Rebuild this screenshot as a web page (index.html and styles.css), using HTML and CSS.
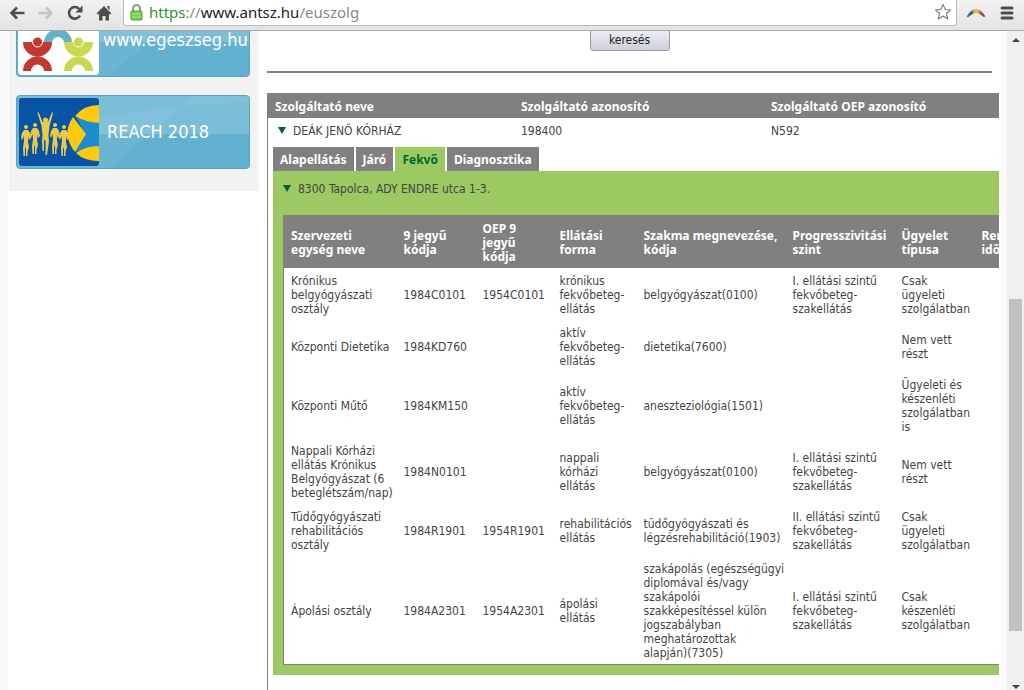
FILE: index.html
```html
<!DOCTYPE html>
<html lang="hu">
<head>
<meta charset="utf-8">
<title>ANTSZ</title>
<link rel="stylesheet" href="styles.css">
</head>
<body>
<header class="toolbar">
  <nav class="nav">
    <button class="tool" aria-label="Vissza"><svg width="16" height="16" viewBox="0 0 16 16"><path d="M15.500 8H3M8 2.500 2.500 8 8 13.500" fill="none" stroke="#4d4d4d" stroke-width="2.600"/></svg></button>
    <button class="tool" aria-label="Előre"><svg width="16" height="16" viewBox="0 0 16 16"><path d="M0.500 8H13M8 2.500 13.500 8 8 13.500" fill="none" stroke="#c4c4c4" stroke-width="2.600"/></svg></button>
    <button class="tool" aria-label="Frissítés"><svg width="16" height="16" viewBox="0 0 16 16"><path d="M13 10.500A5.800 5.800 0 1 1 12.200 4" fill="none" stroke="#4d4d4d" stroke-width="2.600"/><path d="M15.500 0.500V7.500H8.500z" fill="#4d4d4d"/></svg></button>
    <button class="tool" aria-label="Kezdőlap"><svg width="16" height="16" viewBox="0 0 16 16"><path d="M8 1 15.500 8.500 14 9.500 13 8.800V15.500H9.500V11H6.500V15.500H3V8.800L2 9.500 0.500 8.500zM11.500 1H13.500V5L11.500 3z" fill="#4d4d4d"/></svg></button>
  </nav>
  <div class="address">
    <svg width="13" height="17" viewBox="0 0 13 17"><path d="M3 8V4.500a3.500 3.500 0 0 1 7 0V8" fill="none" stroke="#8b9a8b" stroke-width="2"/><rect x="1" y="7" width="11" height="9" rx="1" fill="#78cf50" stroke="#4ba32c"/><path d="M2 10H11M2 13H11" stroke="#a5e388"/></svg>
    <span class="url"><span class="secure">https</span>://<span class="host">www.antsz.hu</span>/euszolg</span>
    <button class="tool star" aria-label="Könyvjelző"><svg width="18" height="20" viewBox="0 0 20 20"><path d="M10 1.500 12.400 7.200 18.500 7.700 13.800 11.700 15.300 17.800 10 14.500 4.700 17.800 6.200 11.700 1.500 7.700 7.600 7.200z" fill="#fff" stroke="#777" stroke-width="1.200" stroke-linejoin="round"/></svg></button>
  </div>
  <svg class="ext" width="20" height="12" viewBox="0 0 20 12"><defs><linearGradient id="arc"><stop offset="0" stop-color="#2fae5e"/><stop offset=".25" stop-color="#2b5597"/><stop offset=".42" stop-color="#f0b040"/><stop offset=".6" stop-color="#eeb573"/><stop offset=".75" stop-color="#b0553b"/><stop offset="1" stop-color="#2b5ba8"/></linearGradient></defs><path d="M0.500 9.500Q5 2 10 2T19.500 9.500L17.500 10Q13 6 10 6T2 10.500z" fill="url(#arc)"/></svg>
  <button class="tool" aria-label="Menü"><svg width="14" height="14" viewBox="0 0 14 14"><path d="M2 2H12M2 7H12M2 12H12" stroke="#4d4d4d" stroke-width="3" stroke-linecap="round"/></svg></button>
</header>
<div class="viewport">
  <div class="page">
    <aside class="sidebar">
      <a class="banner" href="#">
        <svg class="sheen" viewBox="0 0 232 72" preserveAspectRatio="none"><path d="M0 0H232V38H68Z" fill="#fff" opacity=".16"/><path d="M176 0 92 72H0V40Q110 10 232 6V0z" fill="#fff" opacity=".06"/></svg>
        <svg class="logo" width="81" height="70" viewBox="0 0 81 70"><rect width="81" height="70" rx="4" fill="#fff"/><path d="M26 38a14 14 0 0 1 28 0H46a6 6 0 0 0-12 0z" fill="#64b2c8"/><g fill="#c03a32"><path d="M5 37a14.500 14.500 0 0 0 29 0zM5 66a14.500 14.500 0 0 1 29 0H26a6 6 0 0 0-13 0z"/><circle cx="19.500" cy="37" r="5" stroke="#fff"/></g><g fill="#c9d84f"><path d="M46 37a14.500 14.500 0 0 0 29 0zM46 66a14.500 14.500 0 0 1 29 0H67a6 6 0 0 0-13 0z"/><circle cx="60.500" cy="37" r="5" stroke="#fff"/></g></svg>
        <span class="label">www.egeszseg.hu</span>
      </a>
      <a class="banner" href="#">
        <svg class="sheen" viewBox="0 0 232 72" preserveAspectRatio="none"><path d="M0 0H232V38H68Z" fill="#fff" opacity=".16"/><path d="M176 0 92 72H0V40Q110 10 232 6V0z" fill="#fff" opacity=".06"/></svg>
        <svg class="logo" width="81" height="70" viewBox="0 0 81 70"><rect x="1" y="1" width="80" height="68" rx="3" fill="#0753a6"/><path d="M81 23 57 18 67 37 57 55 81 50z" fill="#1b8ccd"/><path d="M81 8V26Q67 25 57 19 66 8 81 8zM55 20 68 37 57 55Q43 37 55 20zM58 56Q68 49 81 49V64Q66 64 58 56z" fill="#ffc90c"/><defs><path id="runner" d="M0 0a2 2 0 1 1 .1 0M-2 1H2L4 4 5 9 3 11 2.500 7 2 13 3 18 1.500 23 1.500 27H0L0 20-1 18-1 27H-2.500L-3 19-2 12-2.500 7-4 11-5 9-4 4z"/></defs><g fill="#ecc94b"><use href="#runner" x="8" y="32"/><use href="#runner" x="17" y="30"/><use href="#runner" x="37" y="30"/><use href="#runner" x="46" y="32"/><circle cx="27.500" cy="23" r="2.500"/><path d="M20.500 15 24.500 25H30L34 15 35 16 31.500 29 30.500 38 31 45 29 58H27.500L27.500 44 26 42 26 54H24.500L24 44 24.500 38 23.500 29 19.500 16z"/></g></svg>
        <span class="label wide">REACH 2018</span>
      </a>
    </aside>
    <main class="main">
      <form class="search"><button class="submit" type="button">keresés</button></form>
      <section class="results">
        <table class="providers">
          <colgroup><col class="p1"><col class="p2"><col></colgroup>
          <thead><tr><th>Szolgáltató neve</th><th>Szolgáltató azonosító</th><th>Szolgáltató OEP azonosító</th></tr></thead>
          <tbody><tr><td><span class="arrow"></span>DEÁK JENŐ KÓRHÁZ</td><td>198400</td><td>N592</td></tr></tbody>
        </table>
        <div class="tabs">
          <button class="tab">Alapellátás</button><button class="tab">Járó</button><button class="tab active">Fekvő</button><button class="tab">Diagnosztika</button>
        </div>
        <div class="panel">
          <div class="site"><span class="arrow"></span>8300 Tapolca, ADY ENDRE utca 1-3.</div>
          <table class="units">
            <colgroup><col class="u1"><col class="u2"><col class="u3"><col class="u4"><col class="u5"><col class="u6"><col class="u7"><col class="u8"></colgroup>
            <thead><tr><th>Szervezeti egység neve</th><th>9 jegyű kódja</th><th>OEP 9 jegyű kódja</th><th>Ellátási forma</th><th>Szakma megnevezése, kódja</th><th>Progresszivitási szint</th><th>Ügyelet típusa</th><th>Rendelési<br>idő</th></tr></thead>
            <tbody>
              <tr><td>Krónikus<br>belgyógyászati<br>osztály</td><td>1984C0101</td><td>1954C0101</td><td>krónikus<br>fekvőbeteg-<br>ellátás</td><td>belgyógyászat(0100)</td><td>I. ellátási szintű<br>fekvőbeteg-<br>szakellátás</td><td>Csak<br>ügyeleti<br>szolgálatban</td><td></td></tr>
              <tr><td>Központi Dietetika</td><td>1984KD760</td><td></td><td>aktív<br>fekvőbeteg-<br>ellátás</td><td>dietetika(7600)</td><td></td><td>Nem vett<br>részt</td><td></td></tr>
              <tr><td>Központi Műtő</td><td>1984KM150</td><td></td><td>aktív<br>fekvőbeteg-<br>ellátás</td><td>aneszteziológia(1501)</td><td></td><td>Ügyeleti és<br>készenléti<br>szolgálatban<br>is</td><td></td></tr>
              <tr><td>Nappali Kórházi<br>ellátás Krónikus<br>Belgyógyászat (6<br>beteglétszám/nap)</td><td>1984N0101</td><td></td><td>nappali<br>kórházi<br>ellátás</td><td>belgyógyászat(0100)</td><td>I. ellátási szintű<br>fekvőbeteg-<br>szakellátás</td><td>Nem vett<br>részt</td><td></td></tr>
              <tr><td>Tüdőgyógyászati<br>rehabilitációs<br>osztály</td><td>1984R1901</td><td>1954R1901</td><td>rehabilitációs<br>ellátás</td><td>tüdőgyógyászati és<br>légzésrehabilitáció(1903)</td><td>II. ellátási szintű<br>fekvőbeteg-<br>szakellátás</td><td>Csak<br>ügyeleti<br>szolgálatban</td><td></td></tr>
              <tr><td>Ápolási osztály</td><td>1984A2301</td><td>1954A2301</td><td>ápolási<br>ellátás</td><td>szakápolás (egészségügyi<br>diplomával és/vagy<br>szakápolói<br>szakképesítéssel külön<br>jogszabályban<br>meghatározottak<br>alapján)(7305)</td><td>I. ellátási szintű<br>fekvőbeteg-<br>szakellátás</td><td>Csak<br>készenléti<br>szolgálatban</td><td></td></tr>
            </tbody>
          </table>
        </div>
      </section>
    </main>
  </div>
  <div class="scrollbar"><span class="up"></span><span class="thumb"></span><span class="down"></span></div>
</div>
</body>
</html>
```
FILE: styles.css
```css
* { box-sizing: border-box; }
body {
  margin: 0;
  height: 100vh;
  display: flex;
  flex-direction: column;
  overflow: hidden;
  background: #fff;
  color: #444;
  font: 12px/14px "DejaVu Sans Condensed", "DejaVu Sans", sans-serif;
}
button { font: inherit; border: 0; padding: 0; background: none; }
svg { display: block; flex: none; }

.toolbar {
  flex: none;
  display: flex;
  align-items: center;
  height: 31px;
  padding: 0 10px 5px 9px;
  background: linear-gradient(#f2f2f2, #e3e3e3);
  border-bottom: 1px solid #a8a8a8;
}
.nav { display: flex; gap: 13px; margin-right: 11px; }
.address {
  flex: 1;
  display: flex;
  align-items: center;
  gap: 6px;
  height: 26px;
  padding: 0 4px 0 6px;
  background: #fff;
  border: 1px solid #bbb;
  border-top: 0;
  border-radius: 0 0 3px 3px;
}
.url { flex: 1; font: 15px/20px "Noto Sans", sans-serif; color: #888; }
.secure { color: #2e962e; }
.host { color: #222; }
.ext { margin: 0 14px 0 9px; }

.viewport { flex: 1; min-height: 0; display: flex; overflow: hidden; }
.page {
  flex: 1;
  min-width: 0;
  display: flex;
  align-items: flex-start;
  gap: 8px;
  padding: 0 8px 0 9px;
  background: linear-gradient(90deg, #fafafa 8px, #fff 8px calc(100% - 6px), #fafafa calc(100% - 6px));
}
.sidebar {
  flex: none;
  width: 250px;
  margin-top: -28px;
  padding: 0 9px 22px 7px;
  display: flex;
  flex-direction: column;
  gap: 18px;
  background: #f2f2f2;
}
.banner {
  position: relative;
  display: flex;
  align-items: center;
  height: 74px;
  padding-left: 1px;
  overflow: hidden;
  background: #63b1d0;
  border: 1px solid #57a6bd;
  border-radius: 4px;
  color: #fff;
  text-decoration: none;
}
.sheen { position: absolute; inset: 0; width: 100%; height: 100%; }
.logo { position: relative; }
.label { position: relative; padding-left: 4px; font: 18px/22px "DejaVu Sans Condensed", sans-serif; white-space: nowrap; }
.wide { padding-left: 8px; }

.main { flex: 1; min-width: 0; }
.search {
  display: flex;
  justify-content: center;
  margin: -6px 7px 20px 0;
  padding-bottom: 20px;
  border-bottom: 2px solid #808080;
}
.submit {
  width: 80px;
  height: 26px;
  padding-top: 3px;
  color: #222;
  background: linear-gradient(#f4f4f8, #cfcfdd);
  border: 1px solid #9a9aa8;
  border-radius: 3px;
}
.results { border-left: 1px solid #808080; height: 100vh; overflow: hidden; }
table { border-collapse: collapse; table-layout: fixed; }
th, td { text-align: left; padding: 6px 7px 4px; }
th { color: #fff; background: #808080; font-family: "Noto Sans", sans-serif; font-weight: 700; }
.providers { width: 100%; }
.providers th { padding: 7px 7px 4px; }
.p1 { width: 246px; }
.p2 { width: 250px; }
.arrow {
  display: inline-block;
  margin: 0 7px 1px 3px;
  border: 4px solid transparent;
  border-top: 7px solid #006432;
  border-bottom: 0;
}
.tabs { display: flex; gap: 2px; padding: 5px 0 0 5px; }
.tab {
  padding: 6px 7px 4px;
  color: #fff;
  background: #808080;
  font-family: "Noto Sans", sans-serif;
  font-weight: 700;
}
.active { color: #006432; background: #9dc963; }
.panel { margin-left: 5px; padding: 11px 0 10px 10px; background: #9dc963; }
.site { padding-bottom: 19px; }
.site .arrow { margin-left: 0; }
.units { width: 800px; background: #fff; border: 1px solid #808080; }
.u1 { width: 113px; }
.u2 { width: 79px; }
.u3 { width: 77px; }
.u4 { width: 84px; }
.u5 { width: 149px; }
.u6 { width: 109px; }
.u7 { width: 80px; }
.units td { white-space: nowrap; }

.scrollbar {
  flex: none;
  width: 17px;
  display: flex;
  flex-direction: column;
  align-items: center;
  justify-content: space-between;
  padding: 7px 0 1px;
  background: #f0f0f0;
}
.up, .down { border: 4px solid transparent; }
.up { border-top: 0; border-bottom: 4px solid #444; }
.down { border-bottom: 0; border-top: 4px solid #444; }
.thumb { width: 13px; height: 51%; margin-top: 203px; background: #c1c1c1; }
```
